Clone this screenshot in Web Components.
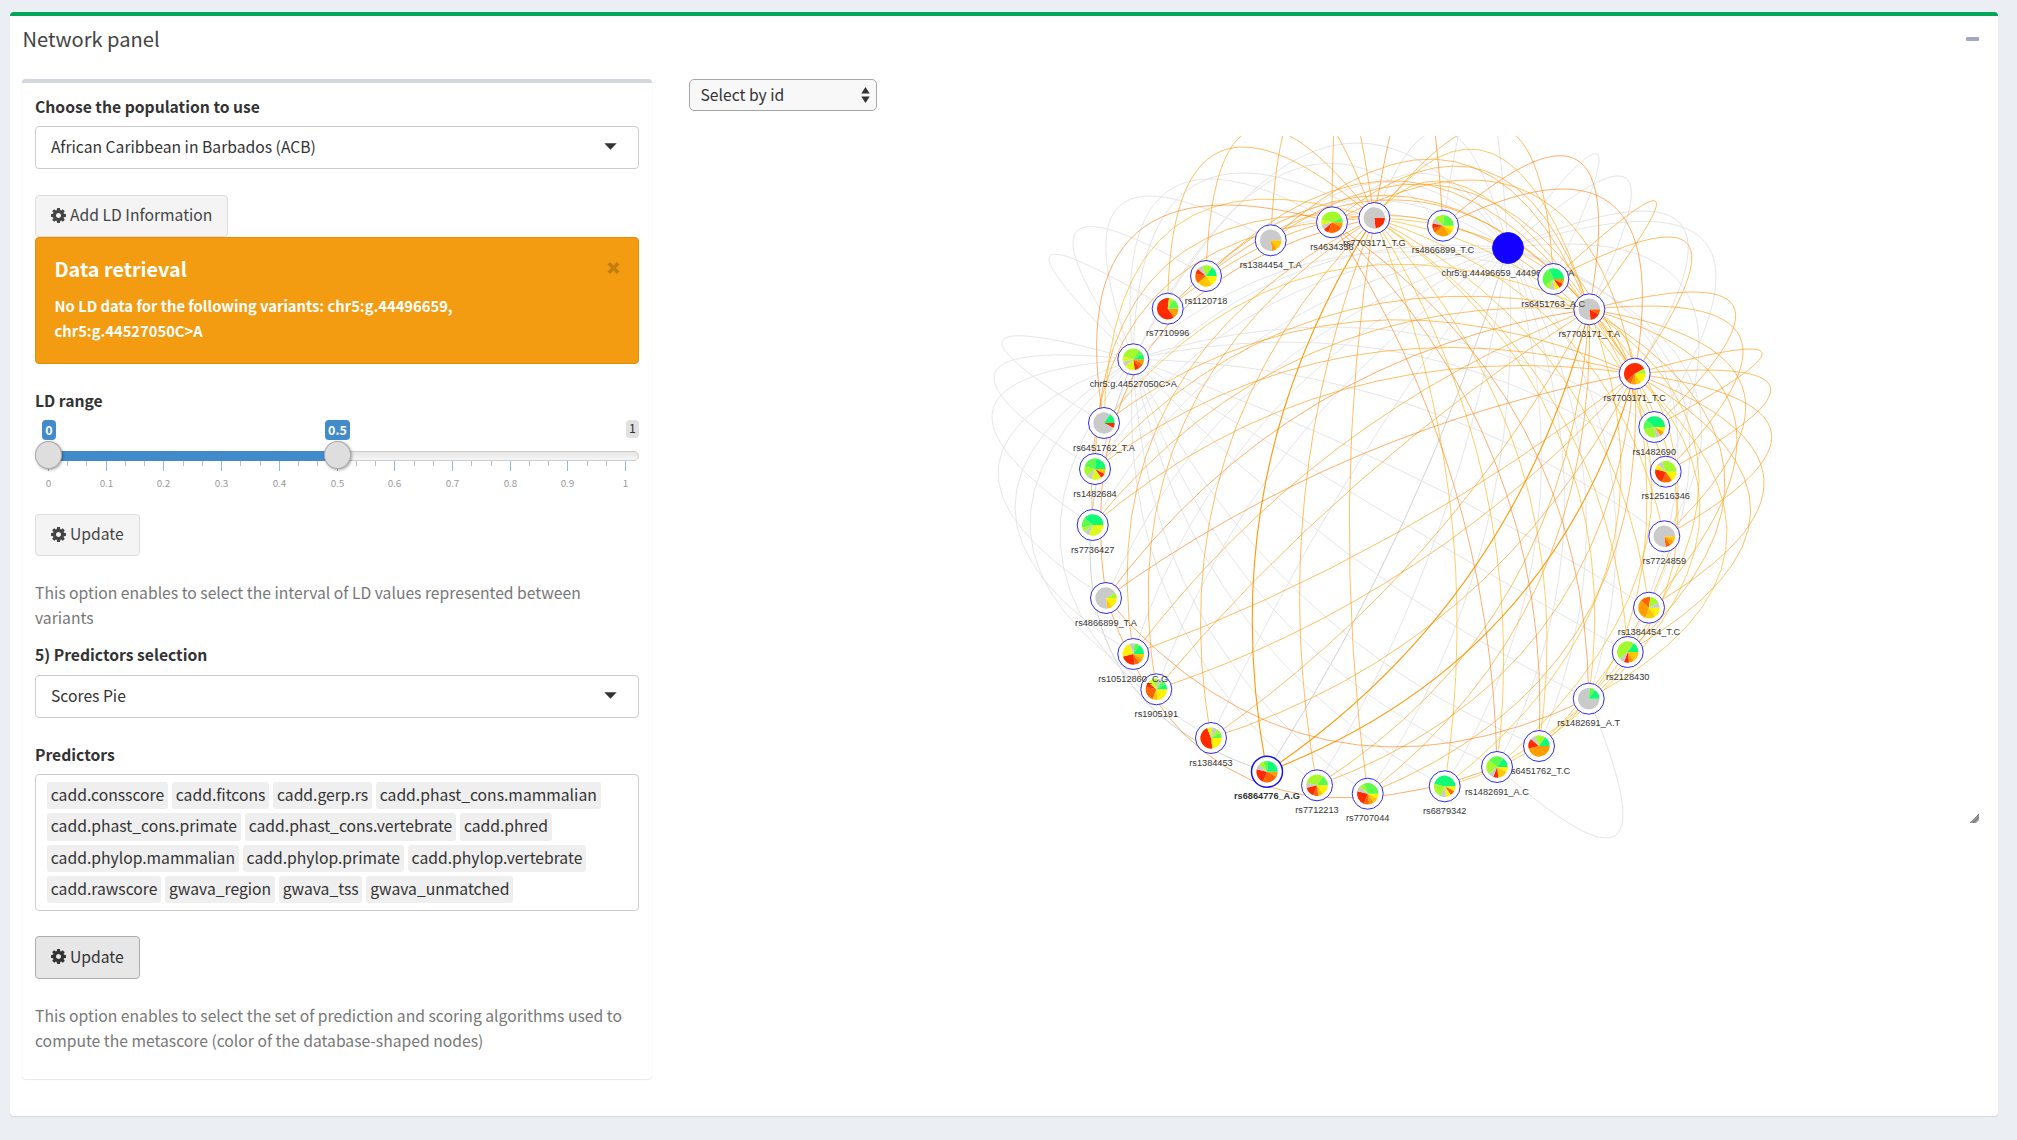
<!DOCTYPE html>
<html lang="en">
<head>
<meta charset="utf-8">
<title>Network panel</title>
<style>
html,body{margin:0;height:100%}
body{background:#ebeff4;color:#333;font:15.7px/25px "Noto Sans CJK SC","Noto Sans",sans-serif;overflow:hidden}
</style>
</head>
<body>
<network-page></network-page>
<script>
const define = (name, html, setup) => customElements.define(name, class extends HTMLElement {
  constructor() {
    super();
    const t = document.createElement('template');
    t.innerHTML = html;
    this.attachShadow({mode: 'open'}).append(t.content.cloneNode(true));
  }
  connectedCallback() { if (setup && !this.ready) { this.ready = true; setup(this, this.shadowRoot); } }
});

define('panel-box', `
<style>
:host{display:block;box-sizing:border-box;background:#fff;border-top:4px solid var(--accent,#d2d6de);border-radius:4px;box-shadow:0 1px 1px rgba(0,0,0,.1)}
</style><slot></slot>`);

define('form-label', `
<style>:host{display:block;font-weight:700;height:25px;line-height:23px;white-space:nowrap}</style><slot></slot>`);

define('help-text', `
<style>:host{display:block;color:#777;line-height:25px;white-space:nowrap}</style><slot></slot>`);

define('select-box', `
<style>
:host{display:flex;box-sizing:border-box;height:43px;border:1px solid #ccc;border-radius:4px;background:#fff;align-items:center;justify-content:space-between;padding:0 21px 2px 15px;white-space:nowrap}
svg{display:block}
</style><span><slot></slot></span><svg width="13" height="7"><path d="M.3 .3H12.7L6.5 6.7Z" fill="#333"/></svg>`);

define('gear-button', `
<style>
:host{display:flex;box-sizing:border-box;width:max-content;height:42px;border:1px solid #ddd;border-radius:4px;background:#f4f4f4;color:#444;align-items:center;padding:0 15px 3px;gap:4px;white-space:nowrap}
:host([active]){background:#e7e7e7;border-color:#adadad;color:#333;height:43px}
svg{display:block;margin-top:1px}
</style>
<svg width="15" height="15" viewBox="0 0 1536 1536"><path fill="currentColor" d="M1024 768q0-106-75-181t-181-75-181 75-75 181 75 181 181 75 181-75 75-181zm512-109v222q0 12-8 23t-20 13l-185 28q-19 54-39 91 35 50 107 138 10 12 10 25t-9 23q-27 37-99 108t-94 71q-12 0-26-9l-138-108q-44 23-91 38-16 136-29 186-7 28-36 28H657q-14 0-24.500-8.500T621 1506l-28-184q-49-16-90-37l-141 107q-10 9-25 9-14 0-25-11-126-114-165-168-7-10-7-23 0-12 8-23 15-21 51-66.500t54-70.500q-27-50-41-99L29 913q-13-2-21-12.500T0 877V655q0-12 8-23t19-13l186-28q14-46 39-92-40-57-107-138-10-12-10-24 0-10 9-23 26-36 98.500-107.500T337 135q13 0 26 10l138 107q44-23 91-38 16-136 29-186 7-28 36-28h222q14 0 24.500 8.500T915 30l28 184q49 16 90 37l142-107q9-9 24-9 13 0 25 10 129 119 165 170 7 8 7 22 0 12-8 23-15 21-51 66.500t-54 70.500q26 50 41 98l183 28q13 2 21 12.500t8 23.500z"/></svg><span><slot></slot></span>`);

define('alert-box', `
<style>
:host{display:flex;box-sizing:border-box;height:127px;background:#f39c12;border:1px solid #e08e0b;border-radius:4px;color:#fff;padding:17px 18px 0 18.500px;justify-content:space-between}
.t{font-size:19.800px;font-weight:700;height:25px;line-height:27px;margin-bottom:13px}
.m{font-weight:700;font-size:14.750px;white-space:nowrap}
svg{margin-top:6px;flex:none}
</style>
<div><div class="t"><slot name="title"></slot></div><div class="m"><slot></slot></div></div>
<svg width="13" height="14" viewBox="0 0 13 14"><path d="M1.800 2.200L11.200 11.800M11.200 2.200L1.800 11.800" stroke="#c27d0e" stroke-width="3.600"/></svg>`);

define('range-slider', `
<style>
:host{display:block;height:78px}
.area{position:relative;height:78px}
.track{position:absolute;left:0;right:0;top:36px;height:10px;box-sizing:border-box;border:1px solid #ccc;border-radius:8px;background:linear-gradient(#ddd -50%,#fff 150%)}
.bar{position:absolute;left:14px;width:289px;top:36px;height:10px;background:#428bca}
.h{position:absolute;top:26px;width:27px;height:28px;box-sizing:border-box;border:1px solid #ababab;border-radius:50%;background:#dedede;box-shadow:1px 1px 3px rgba(0,0,0,.35)}
.b{position:absolute;top:5px;height:20px;line-height:19px;border-radius:4px;background:#428bca;color:#fff;font-size:12.500px;font-weight:700;text-align:center}
.max{background:#e1e1e1;color:#333;height:18px;line-height:17px;font-weight:400;font-size:12.300px}
svg{position:absolute;left:0;top:46px;overflow:visible}
text{font-size:9.900px;fill:#999;text-anchor:middle}
</style>
<div class="area"><div class="track"></div><div class="bar"></div><svg width="604" height="32"></svg>
<div class="h" style="left:0"></div><div class="h" style="left:288.500px"></div>
<div class="b" style="left:7px;width:14px">0</div><div class="b" style="left:290px;width:25px">0.5</div><div class="b max" style="left:591px;width:13px">1</div></div>`,
(el, root) => {
  let s = '';
  for (let i = 0; i <= 30; i++) {
    const x = Math.round(13 + i * 19.24), big = i % 3 === 0;
    s += `<rect x="${x}" y="0" width="1" height="${big ? 10 : 5}" fill="${big ? '#8fbbe0' : '#bbb'}"/>`;
    if (big) s += `<text x="${x + .5}" y="26">${i / 30}</text>`;
  }
  root.querySelector('svg').innerHTML = s;
});

define('tag-list', `
<style>
:host{display:flex;box-sizing:border-box;height:137px;border:1px solid #ccc;border-radius:4px;flex-wrap:wrap;align-content:flex-start;gap:4px;padding:7px 10px 0 11px}
::slotted(span){display:block;height:27.250px;line-height:25px;padding:0 3.800px;border-radius:3px;background:#efefef;white-space:nowrap}
</style><slot></slot>`);

define('native-select', `
<style>
:host{display:flex;box-sizing:border-box;width:188px;height:32px;border:1px solid #a6a6a6;border-radius:5px;background:#f8f8f8;align-items:center;justify-content:space-between;padding:0 6px 1px 10.500px}
</style><span><slot></slot></span><svg width="9" height="16"><path d="M4.500 0L8.700 6.500H.3ZM4.500 16L8.700 9.500H.3Z" fill="#333"/></svg>`);

define('ld-network', `
<style>
:host{display:block;width:1290px;height:720px}
svg{display:block}
text{font-family:"Liberation Sans",Arial,sans-serif;font-size:9.200px;text-anchor:middle;fill:#343434}
</style><svg width="1290" height="720" viewBox="689 136 1290 720"></svg>`,
(el, root) => {
  const nodes = {
    H1:['rs7703171_T.G',1374.3,218,'rrrxxxxxxxxxx'],
    H2:['rs7703171_T.A',1589.3,309.3,'orrxxxxxxxxxx'],
    H3:['rs7703171_T.C',1634.7,373.7,'YYyOorrrrrrrL'],
    G1:['chr5:g.44496659_44496660insA',1508,248,''],
    G2:['chr5:g.44527050C>A',1133.3,359.3,'OorllxlLLLLgG'],
    a:['rs1384454_T.A',1270.7,240.3,'yyOxxxxxxxxxx'],
    b:['rs4634356',1332,222.3,'OooorxlLLLLLg'],
    c:['rs4866899_T.C',1443,225.7,'YyOOOorxLLggg'],
    d:['rs6451763_A.C',1553.3,279,'OrYxLggggGGGG'],
    e:['rs1482690',1654.3,427,'YOxLLLggGGGGG'],
    f:['rs12516346',1665.7,471.7,'YYoorrrYxLLLL'],
    g:['rs7724859',1664.3,536.3,'yOoxxxxxxxxxx'],
    h:['rs1384454_T.C',1649,607.7,'YYyyOOOOooLLx'],
    i:['rs2128430',1627.7,652,'yyOrxLLLLLLGG'],
    j:['rs1482691_A.T',1588.7,698.7,'xxxxxxxxxxgGG'],
    k:['rs6451762_T.C',1539,746,'OOOOOOrrxLLGG'],
    l:['rs1482691_A.C',1497,767,'YyyrxLLLgggGG'],
    m:['rs6879342',1444.7,786.3,'YoYxLLLGGGGGG'],
    n:['rs7707044',1367.7,793.7,'YyOorrrxLgggg'],
    o:['rs7712213',1317,785.3,'YYyorrxLLLLgg'],
    p:['rs6864776_A.G',1267,771.7,'OooorrrxLgGGG'],
    q:['rs1384453',1211,738,'YYYrrrrrrlxLg'],
    r:['rs1905191',1156.3,689.3,'YYYyooorlLxgG'],
    s:['rs10512860_C.G',1133.3,654,'yOorrrYYYxgGG'],
    t:['rs4866899_T.A',1106,598,'YYyxxxxxxxxxL'],
    u:['rs7736427',1092.7,525,'YlllxLggGGGGG'],
    v:['rs1482684',1095,469,'yrllxLLgggGGG'],
    w:['rs6451762_T.A',1104,423,'rxxxxxxxxxxGG'],
    x:['rs7710996',1167.7,308.7,'OOrrrrrrrrLgg'],
    y:['rs1120718',1206,276,'YYyyyoorxLLGG'],
  };
  const order = 'b H1 a c G1 H2 d H3 e f g h i j k l m n o p q r s t u v w G2 x y'.split(' ');
  const colors = {r:'#ff2a00',o:'#ff6400',O:'#ff9c00',y:'#ffc800',Y:'#fff200',l:'#d9fb17',L:'#a4f92c',g:'#5cfb4c',G:'#10fb75',x:'#cacaca'};
  // Bends: T/R/L/B give the outermost point of a curve on that side, P a point it passes through.
  const bends = {
    'H1 x':['T',1243,147],'H1 y':['T',1263,128],'H1 a':['T',1305,103],'H1 b':['T',1343,80],'H1 c':['T',1416,70],
    'H1 d':['T',1490,125],'H1 H2':['T',1470,149],'H1 H3':['T',1436,181],'H2 a':['T',1430,159],'H2 b':['T',1455,166],'H3 b':['T',1470,180],
    'H2 c':['T',1560,155.7],'H3 c':['T',1563,189],'H2 d':['R',1656.5,204],'H3 d':['T',1668,237],'H2 H3':['P',1622,333],
    'H2 e':['T',1693,292],'H2 f':['R',1743,352],'H3 e':['T',1750,349],'H3 f':['R',1770.7,390],'H3 g':['R',1771.7,437],
    'H3 h':['R',1764,483],'H3 i':['R',1750.7,510],'H3 j':['R',1727,533],'H3 k':['R',1700,510],'H3 l':['R',1678,520],'H3 m':['R',1647,500],
    'H2 g':['R',1745.7,407],'H2 h':['R',1737,440],'H2 i':['R',1725,483],'H2 j':['R',1699,480],'H2 k':['R',1678,490],'H2 l':['R',1652,490],'H2 m':['R',1621,470],
    'G1 d':['R',1599,160],'G1 H2':['T',1618,176],'G1 H3':['T',1643,211],'G1 e':['R',1716,277],'G1 f':['R',1699,345],'G1 c':['T',1480,80],
    'G1 g':['R',1702,430],'G1 h':['R',1690,450],'G1 i':['R',1678,450],'G1 H1':['T',1440,130],'G1 p':['P',1433,455],
    'G2 w':['L',1002,343],'G2 v':['L',994,378],'G2 u':['L',992,417],'G2 t':['L',998,473],'G2 s':['L',1015,507],'G2 r':['L',1030,523],
    'G2 q':['L',1060,533],'G2 p':['L',1090,550],'G2 x':['L',1049,259],'G2 y':['L',1073,243],'G2 a':['T',1150,196],'G2 b':['T',1210,179],
    'H1 G2':['T',1243,173],'G2 c':['T',1330,163],'G1 G2':['T',1357,143],
    'b w':['T',1226,205],'t j':['B',1395,747],'t l':['B',1345,798],'j l':['B',1606,838],
    'H1 w':['T',1268,199],'H1 v':['P',1170,262],'H1 u':['P',1152,300],'H1 t':['P',1147,352],'H1 s':['P',1148,450],'H1 r':['P',1173,450],
    'H1 q':['P',1220,476],'H1 p':['P',1266,480],'H1 o':['P',1307,476],'H1 n':['P',1350,476],'H1 m':['P',1447,480],'H1 l':['P',1488,500],
    'H1 k':['P',1528,490],'H1 j':['P',1573,473],'b l':['P',1446,460],'b k':['P',1495,462],'b j':['P',1533,447],
    'H2 w':['P',1310,276],'H2 v':['P',1300,325],'H2 u':['P',1310,354],'H2 t':['P',1313,406],'H2 s':['P',1360,432],'H2 r':['P',1360,481],
    'H2 q':['P',1360,615],'H2 p':['P',1447,605],'H2 o':['P',1476,640],'H2 n':['P',1508,640],
    'H3 w':['P',1277,336],'H3 v':['P',1280,373],'H3 u':['P',1293,406],'H3 t':['P',1313,476],'H3 s':['P',1360,553],'H3 r':['P',1360,598],
    'H3 q':['P',1410,640],'H3 p':['P',1510,608],'H3 o':['P',1533,640],'H3 n':['P',1578,630],
    'H2 y':['P',1400,181],'H2 x':['P',1400,196],'H3 a':['P',1420,184],'H3 y':['P',1400,200],'H3 x':['P',1400,216],
  };
  const C = [1380, 500];
  const bend = (A, B, key) => {
    const k = bends[key];
    if (k && k[0] !== 'P') {
      const ax = k[0] === 'L' || k[0] === 'R' ? 0 : 1, sg = k[0] === 'L' || k[0] === 'T' ? -1 : 1;
      const m = k[1 + ax], a = A[ax], b = B[ax];
      const v = m + sg * Math.sqrt(Math.max(0, (m - a) * (m - b)));
      const t = (a - v) / (a + b - 2 * v), q = 1 - ax;
      const w = (k[1 + q] - (1 - t) * (1 - t) * A[q] - t * t * B[q]) / (2 * t * (1 - t));
      return ax ? [w, v] : [v, w];
    }
    let P, t = .5;
    if (k) {
      P = [k[1], k[2]];
      const da = Math.hypot(P[0] - A[0], P[1] - A[1]), db = Math.hypot(P[0] - B[0], P[1] - B[1]);
      t = da / (da + db);
    } else {
      const mx = (A[0] + B[0]) / 2, my = (A[1] + B[1]) / 2, dx = mx - C[0], dy = my - C[1], d = Math.hypot(dx, dy) || 1;
      const s = Math.min(.8 * d, 62) / d;
      P = [mx + dx * s, my + dy * s];
    }
    return [0, 1].map(i => (P[i] - (1 - t) ** 2 * A[i] - t * t * B[i]) / (2 * t * (1 - t)));
  };
  const seg = (p, q, col, w = 1) => {
    const A = nodes[p].slice(1, 3), B = nodes[q].slice(1, 3), V = bend(A, B, p + ' ' + q);
    return `<path d="M${A}Q${V.map(n => n.toFixed(1))} ${B}" stroke="${col}" stroke-width="${w}"/>`;
  };
  const rest = 'abcdefghijklmnopqrstuvwxy'.split('');
  let s = '<g fill="none">';
  for (const G of ['G1', 'G2']) for (const n of rest) s += seg(G, n, n === 'p' ? '#d2d2d2' : '#e6e6e6');
  for (const [p, q] of [['G1','G2'],['G1','H1'],['G1','H2'],['G1','H3'],['H1','G2'],['j','l']]) s += seg(p, q, '#e4e4e4');
  for (const H of ['H1', 'H2', 'H3']) for (const n of rest) {
    let c = 'rgba(255,155,20,.65)';
    if ('jklm'.includes(n) || ('hiefg'.includes(n) && H === 'H1') || (n === 'w' && H !== 'H3')) c = 'rgba(255,180,20,.65)';
    if ('ct'.includes(n)) c = 'rgba(255,130,20,.65)';
    s += n === 'p' ? seg(H, n, '#ff9c0c', 1.15) : seg(H, n, c);
  }
  for (const [p, q] of [['H1','H2'],['H1','H3'],['H2','H3']]) s += seg(p, q, 'rgba(255,170,20,.65)');
  for (const [p, q] of [['b','w'],['b','j'],['b','k'],['b','l'],['t','j'],['t','l']]) s += seg(p, q, 'rgba(255,120,10,.6)');
  s += '</g>';
  for (const id of order) {
    const [name, x, y, pie] = nodes[id], bold = id === 'p';
    s += `<circle cx="${x}" cy="${y}" r="15.500" fill="${pie ? '#fff' : '#1400ff'}" stroke="#1414f0" stroke-width="${bold ? 1.5 : .9}"/>`;
    const pt = a => `${(x + 10.7 * Math.cos(a)).toFixed(2)} ${(y + 10.7 * Math.sin(a)).toFixed(2)}`;
    const n = pie.length;
    for (let i = 0; i < n;) {
      let j = i; while (j < n && pie[j] === pie[i]) j++;
      const a = i / n * 2 * Math.PI, b = j / n * 2 * Math.PI;
      s += `<path d="M${x} ${y}L${pt(a)}A10.700 10.700 0 ${j - i > n / 2 ? 1 : 0} 1 ${pt(b)}Z" fill="${colors[pie[i]]}"/>`;
      i = j;
    }
    s += `<text x="${x}" y="${y + 27.7}"${bold ? ' font-weight="700"' : ''}>${name.replace('>', '&gt;')}</text>`;
  }
  root.querySelector('svg').innerHTML = s;
});

define('network-page', `
<style>
:host{display:block;padding:12px 19px 24px 10px;box-sizing:border-box;height:1140px}
.outer{--accent:#00a65a;height:1104px}
.head{display:flex;height:63px;box-sizing:border-box;padding:11px 19px 0 12.500px;justify-content:space-between}
.title{font-size:20.1px;line-height:24px;color:#444}
.minus{width:13px;height:4px;background:#a2a8c0;margin-top:10px;border-radius:1px}
.row{display:flex;padding-left:12px;gap:37px}
.side{width:630px;height:1000px;padding:12px 13px 0;box-shadow:0 0 1px rgba(0,0,0,.12),0 1px 1px rgba(0,0,0,.08)}
.main{display:flex;flex-direction:column;width:1290px}
ld-network{margin-top:25px}
.grip{align-self:flex-end;margin-top:-42px}
</style>
<panel-box class="outer">
 <div class="head"><span class="title">Network panel</span><div class="minus"></div></div>
 <div class="row">
  <panel-box class="side" style="--accent:#d2d6de">
   <form-label>Choose the population to use</form-label>
   <select-box style="margin-top:6px">African Caribbean in Barbados (ACB)</select-box>
   <gear-button style="margin-top:26px">Add LD Information</gear-button>
   <alert-box><span slot="title">Data retrieval</span>No LD data for the following variants: chr5:g.44496659,<br>chr5:g.44527050C&gt;A</alert-box>
   <form-label style="margin-top:25px">LD range</form-label>
   <range-slider style="margin-top:1px"></range-slider>
   <gear-button style="margin-top:21px">Update</gear-button>
   <help-text style="margin-top:24px">This option enables to select the interval of LD values represented between<br>variants</help-text>
   <form-label style="margin-top:13px">5) Predictors selection</form-label>
   <select-box style="margin-top:7px">Scores Pie</select-box>
   <form-label style="margin-top:25px">Predictors</form-label>
   <tag-list style="margin-top:6px"><span>cadd.consscore</span><span>cadd.fitcons</span><span>cadd.gerp.rs</span><span>cadd.phast_cons.mammalian</span><span>cadd.phast_cons.primate</span><span>cadd.phast_cons.vertebrate</span><span>cadd.phred</span><span>cadd.phylop.mammalian</span><span>cadd.phylop.primate</span><span>cadd.phylop.vertebrate</span><span>cadd.rawscore</span><span>gwava_region</span><span>gwava_tss</span><span>gwava_unmatched</span></tag-list>
   <gear-button active style="margin-top:25px">Update</gear-button>
   <help-text style="margin-top:24px">This option enables to select the set of prediction and scoring algorithms used to<br>compute the metascore (color of the database-shaped nodes)</help-text>
  </panel-box>
  <div class="main">
   <native-select>Select by id</native-select>
   <ld-network></ld-network>
   <svg class="grip" width="9" height="9"><path d="M0 9L9 0V6L6 9Z" fill="#999"/><path d="M0 9L9 0M3 9L9 3" stroke="#666" stroke-width=".8"/></svg>
  </div>
 </div>
</panel-box>`);
</script>
</body>
</html>
